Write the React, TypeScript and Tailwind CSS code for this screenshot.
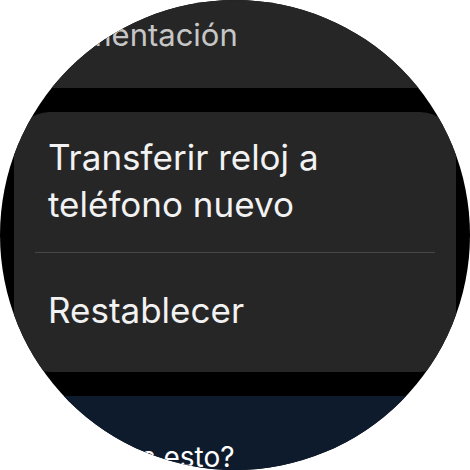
import React from 'react';

const font = { fontFamily: 'Inter, "Noto Sans", sans-serif' };

export default function App() {
  return (
    <div className="w-[470px] h-[470px] bg-white" style={font}>
      <div className="w-[470px] h-[470px] rounded-full bg-black overflow-hidden">
        <div className="flex flex-col gap-6 px-[14px] mt-[-13px]">
          {/* previous item, scrolled mostly off screen */}
          <div className="bg-[#262626] rounded-[36px] pt-6 pb-[30px] px-[34px]">
            <p className="text-[31px] leading-[47px] text-[#c6c6c6]">Alimentación</p>
          </div>

          {/* main card */}
          <div className="bg-[#262626] rounded-[36px]">
            <div className="px-[34px] pt-[22px] pb-6">
              <p className="text-[35px] leading-[47px] text-[#f2f2f2]">
                Transferir reloj a<br />teléfono nuevo
              </p>
            </div>
            <div className="mx-[21px] h-px bg-[#474747]" />
            <div className="px-[34px] pt-[34px] pb-[38px]">
              <p className="text-[35px] leading-[47px] text-[#f2f2f2]">Restablecer</p>
            </div>
          </div>

          {/* next item */}
          <div className="bg-[#0e1b2d] rounded-[36px] pt-[41px] pb-8 px-[34px]">
            <p className="text-[28px] leading-[40px] text-white">¿Qué es esto?</p>
          </div>
        </div>
      </div>
    </div>
  );
}
